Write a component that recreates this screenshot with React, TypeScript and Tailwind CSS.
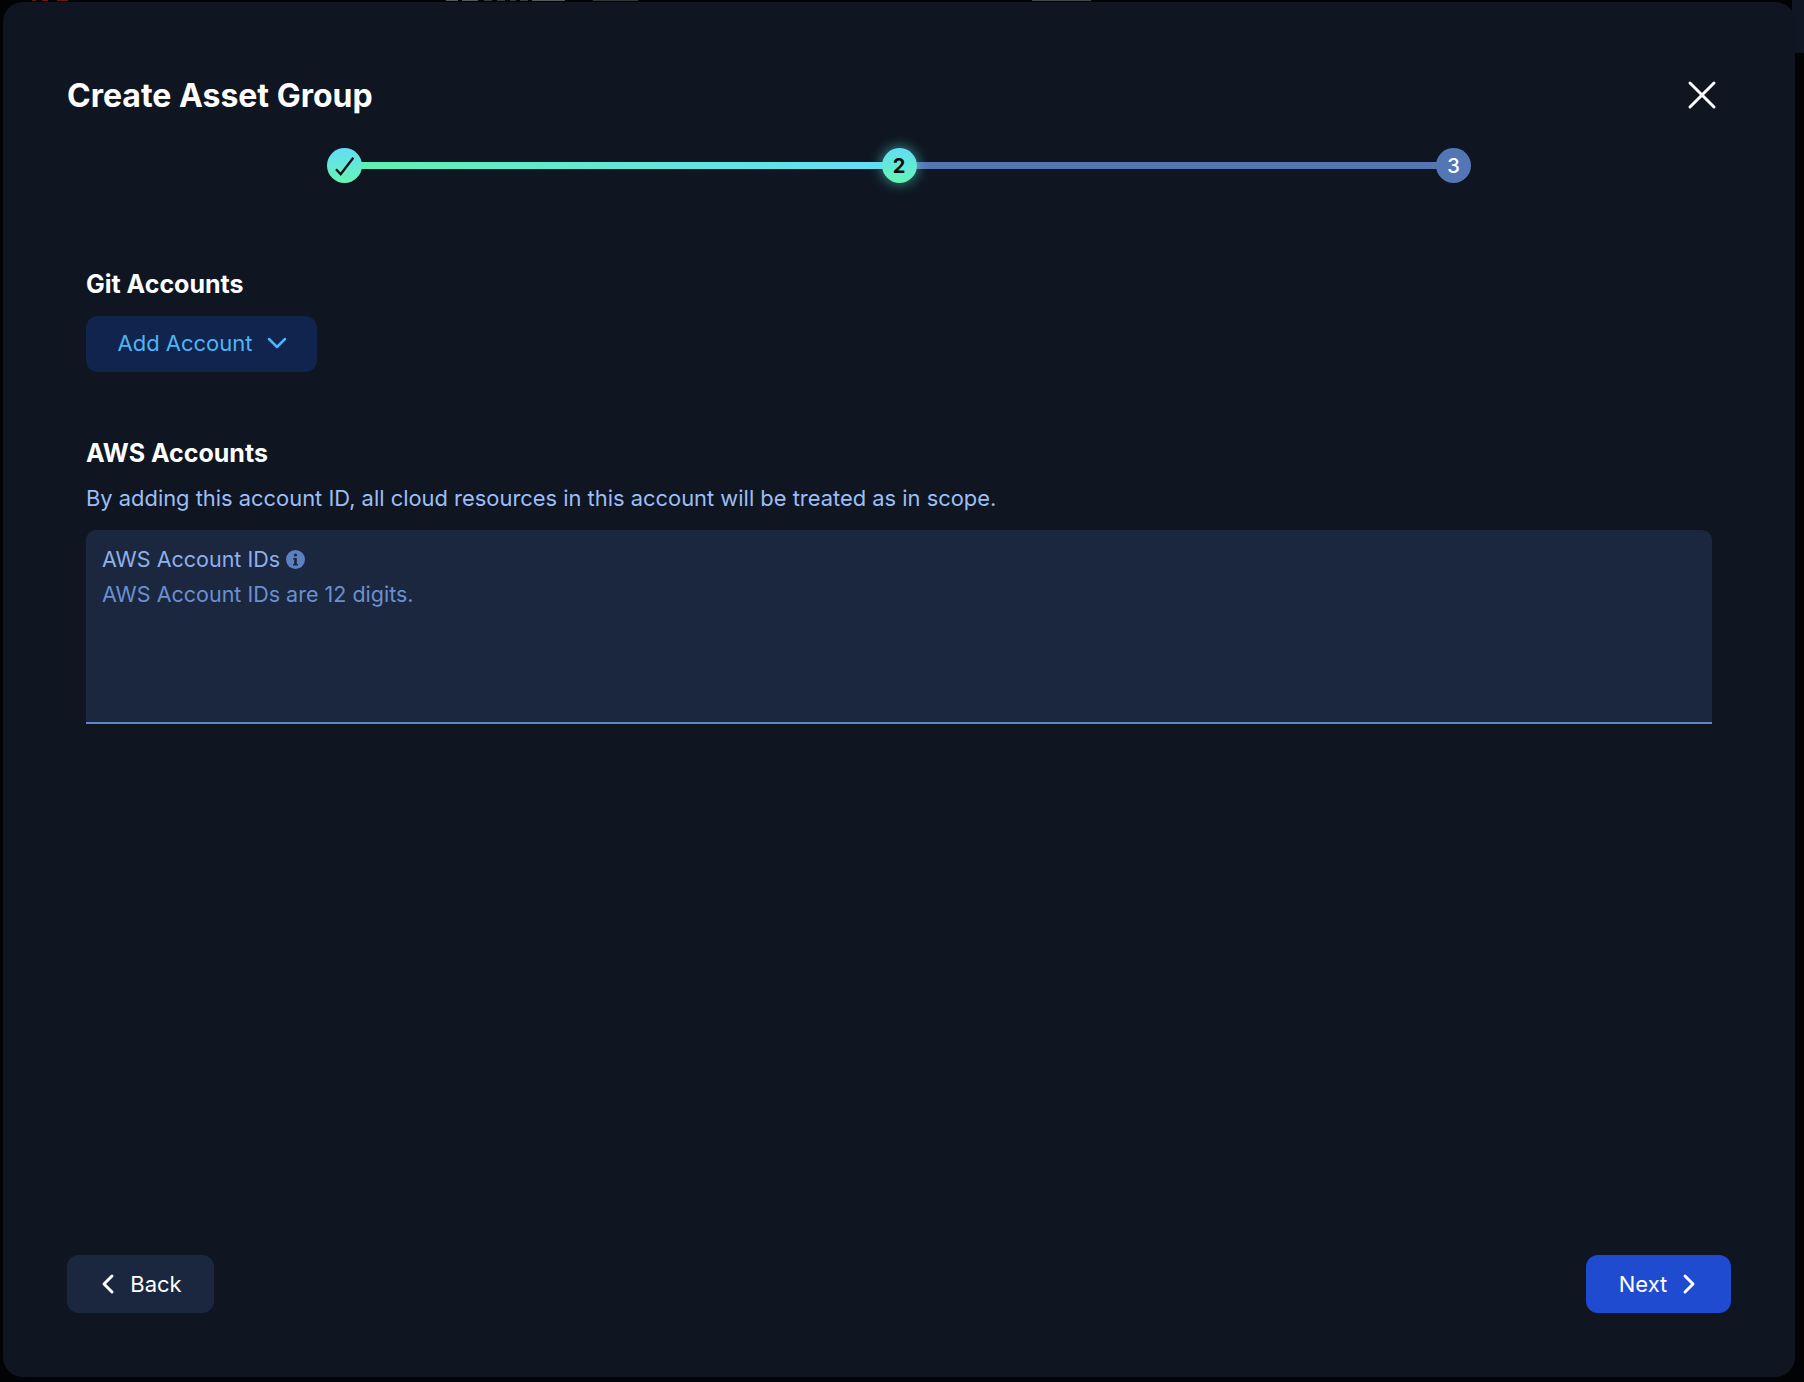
import { ChevronDown, ChevronLeft, ChevronRight, X } from "lucide-react";

const font = "font-['Inter','Liberation_Sans',sans-serif]";

function Step({ label, state }: { label?: string; state: "done" | "active" | "todo" }) {
  const look =
    state === "todo"
      ? "bg-[#5476b4] font-medium text-white"
      : "bg-gradient-to-b from-[#63dcf5] to-[#66f5b4] font-bold text-[#0a0d12]";
  const glow = state === "active" ? "shadow-[0_0_12px_2px_rgba(94,230,220,0.45)]" : "";
  return (
    <div className={`z-10 flex h-[35px] w-[35px] shrink-0 items-center justify-center rounded-full text-[20px] ${look} ${glow}`}>
      {state === "done" ? (
        <svg width="35" height="35" viewBox="0 0 35 35" fill="none" stroke="#0a0d12" strokeWidth="2.3">
          <path d="M9 21.3 13.7 26.3 26.3 9.7" />
        </svg>
      ) : (
        label
      )}
    </div>
  );
}

export default function App() {
  return (
    <div className={`relative h-[1382px] w-[1804px] overflow-hidden bg-[#020305] pb-[5px] pl-[3px] pr-[9px] pt-[2px] ${font}`}>
      {/* page behind the dialog, only its last pixels show */}
      <div className="absolute left-0 top-0 flex h-[1px] w-full">
        <div className="ml-[32px] w-[4px] bg-[#6a1518]" />
        <div className="ml-[6px] w-[6px] bg-[#6a1518]" />
        <div className="ml-[9px] w-[11px] bg-[#6a1518]" />
        <div className="ml-[378px] w-[12px] bg-[#55585c]" />
        <div className="ml-[4px] w-[16px] bg-[#55585c]" />
        <div className="ml-[6px] w-[8px] bg-[#3a3d42]" />
        <div className="ml-[5px] w-[8px] bg-[#3a3d42]" />
        <div className="ml-[5px] w-[6px] bg-[#3a3d42]" />
        <div className="ml-[4px] w-[8px] bg-[#3a3d42]" />
        <div className="ml-[4px] w-[33px] bg-[#55585c]" />
        <div className="ml-[28px] w-[45px] bg-[#33363b]" />
        <div className="ml-[394px] w-[59px] bg-[#44474c]" />
      </div>
      <div className="absolute right-0 top-0 h-[53px] w-[12px] bg-[#0f1624]" />
      <div className="relative flex h-full flex-col rounded-[20px] bg-[#0f1622] pb-[64px] pl-[64px] pr-[64px] pt-[64px]">
        <div className="flex h-[60px] items-center justify-between">
          <h1 className="text-[32px] font-bold leading-[60px] text-white">Create Asset Group</h1>
          <button className="mr-[5px] mb-[2px] text-white">
            <X size={48} strokeWidth={1.5} />
          </button>
        </div>

        <div className="ml-[260px] mt-[22px] flex w-[1144px] items-center">
          <Step state="done" />
          <div className="-mx-px h-[7px] flex-1 bg-gradient-to-r from-[#5ff0b4] to-[#63dcf5]" />
          <Step label="2" state="active" />
          <div className="-mx-px h-[7px] flex-1 bg-[#5476b4]" />
          <Step label="3" state="todo" />
        </div>

        <div className="flex flex-1 flex-col pl-[19px] pr-[19px]">
          <h2 className="mt-[84px] text-[25px] font-bold leading-[34px] text-white">Git Accounts</h2>
          <button className="mt-[15px] flex h-[56px] w-[231px] items-center justify-center gap-[8px] rounded-[12px] bg-[#11244d] pb-[2px] pl-[7px] text-[22px] text-[#4db5f5]">
            Add Account
            <ChevronDown size={32} strokeWidth={1.9} />
          </button>

          <h2 className="mt-[64px] text-[25px] font-bold leading-[34px] text-white">AWS Accounts</h2>
          <p className="mt-[12px] text-[21.9px] leading-[32px] text-[#9cbef5]">
            By adding this account ID, all cloud resources in this account will be treated as in scope.
          </p>
          <div className="mt-[16px] h-[194px] rounded-t-[10px] border-b-2 border-[#5f86c4] bg-[#1a273f] px-[16px] pt-[13px] text-[21.5px] leading-[32px]">
            <div className="flex items-center gap-[6px] text-[#8fb0ea]">
              AWS Account IDs
              <svg width="19" height="19" viewBox="0 0 19 19">
                <circle cx="9.5" cy="9.5" r="9.5" fill="#5d80c0" />
                <circle cx="9.5" cy="5" r="1.6" fill="#1a273f" />
                <path d="M7.2 8h3.6v6h1.2v1.6H7v-1.6h1.2V9.6h-1z" fill="#1a273f" />
              </svg>
            </div>
            <div className="mt-[3px] text-[#6b8fd0]">AWS Account IDs are 12 digits.</div>
          </div>
        </div>

        <div className="flex items-center justify-between">
          <button className="flex h-[58px] w-[147px] items-center justify-center gap-[6px] rounded-[12px] bg-[#1a273f] pr-[7px] text-[22px] text-white">
            <ChevronLeft size={32} strokeWidth={2.2} />
            Back
          </button>
          <button className="flex h-[58px] w-[145px] items-center justify-center gap-[6px] rounded-[12px] bg-[#1f4bd1] pl-[7px] text-[22px] text-white">
            Next
            <ChevronRight size={32} strokeWidth={2.2} />
          </button>
        </div>
      </div>
    </div>
  );
}
